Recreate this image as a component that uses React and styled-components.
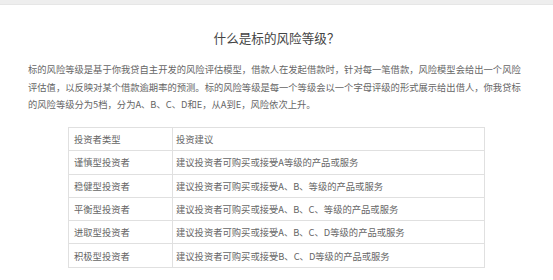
import styled, { createGlobalStyle } from "styled-components";

const GlobalStyle = createGlobalStyle`
	body {
		margin: 0;
		background: #fff;
		font-family: "Noto Sans CJK SC", "Noto Sans", sans-serif;
	}
`;

const rows = [
	["谨慎型投资者", "建议投资者可购买或接受A等级的产品或服务"],
	["稳健型投资者", "建议投资者可购买或接受A、B、等级的产品或服务"],
	["平衡型投资者", "建议投资者可购买或接受A、B、C、等级的产品或服务"],
	["进取型投资者", "建议投资者可购买或接受A、B、C、D等级的产品或服务"],
	["积极型投资者", "建议投资者可购买或接受B、C、D等级的产品或服务"],
];

const App = () => {
	return (
		<>
			<GlobalStyle />
			<TopBar />
			<Page>
				<Title>什么是标的风险等级？</Title>
				<Intro>
					标的风险等级是基于你我贷自主开发的风险评估模型，借款人在发起借款时，针对每一笔借款，风险模型会给出一个风险
					<br />
					评估值，以反映对某个借款逾期率的预测。标的风险等级是每一个等级会以一个字母评级的形式展示给出借人，你我贷标
					<br />
					的风险等级分为5档，分为A、B、C、D和E，从A到E，风险依次上升。
				</Intro>
				<Grade>
					<tbody>
						<tr>
							<td>投资者类型</td>
							<td>投资建议</td>
						</tr>
						{rows.map(([type, advice]) => (
							<tr key={type}>
								<td>{type}</td>
								<td>{advice}</td>
							</tr>
						))}
					</tbody>
				</Grade>
			</Page>
		</>
	);
};

const TopBar = styled.div`
	height: 4px;
	background: #eeeeee;
	border-bottom: 1px solid #e6e6e6;
`;

const Page = styled.main`
	display: flex;
	flex-direction: column;
	align-items: center;
	padding: 0 28px;
`;

const Title = styled.h1`
	margin: 23px 0 0;
	font-size: 12.6px;
	line-height: 20px;
	font-weight: normal;
	color: #444;
`;

const Intro = styled.p`
	align-self: stretch;
	margin: 13px 0 0;
	font-size: 9.3px;
	line-height: 17.5px;
	color: #666;
	white-space: nowrap;
`;

const Grade = styled.table`
	width: 417px;
	margin-top: 13.5px;
	border-collapse: collapse;
	font-size: 9.3px;
	color: #666;

	td {
		height: 23.3px;
		padding: 0 0 0 5px;
		border: 1px solid #e0e0e0;
		vertical-align: middle;
		box-sizing: border-box;
	}

	td:first-child {
		width: 104px;
	}

	td:last-child {
		padding-left: 3px;
	}
`;

export default App;
